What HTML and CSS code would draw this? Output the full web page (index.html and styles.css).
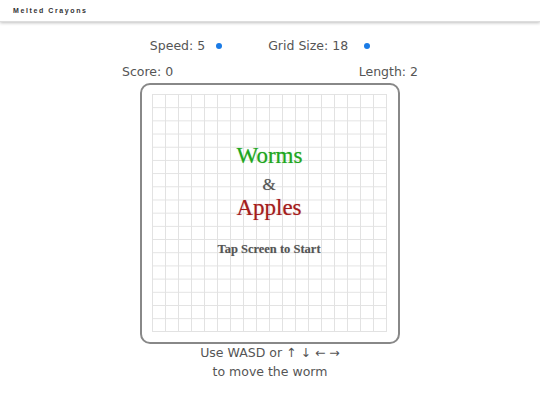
FILE: index.html
```html
<!DOCTYPE html>
<html>
<head>
<meta charset="utf-8">
<link rel="stylesheet" href="styles.css">
</head>
<body>
<header class="topbar"><span class="brand">Melted Crayons</span></header>
<main class="game">
  <div class="settings">
    <div class="setting"><span>Speed: 5</span><span class="dot"></span></div>
    <div class="setting setting-wide"><span>Grid Size: 18</span><span class="dot"></span></div>
  </div>
  <div class="stats"><span>Score: 0</span><span>Length: 2</span></div>
  <div class="board">
    <div class="grid">
      <div class="title">
        <div class="worms">Worms</div>
        <div class="amp">&amp;</div>
        <div class="apples">Apples</div>
        <div class="tap">Tap Screen to Start</div>
      </div>
    </div>
  </div>
  <div class="help">Use WASD or ↑ ↓ ← →<br>to move the worm</div>
</main>
</body>
</html>
```
FILE: styles.css
```css
html, body { margin: 0; padding: 0; background: #fff; }
body { font-family: "DejaVu Sans", Verdana, sans-serif; color: #555; }
.topbar {
  height: 22px;
  display: flex;
  align-items: center;
  padding-left: 13px;
  box-shadow: 0 1px 3px rgba(0,0,0,0.25);
  border-bottom: 1px solid #ddd;
  box-sizing: border-box;
}
.brand {
  font-family: "Liberation Sans", Arial, sans-serif;
  font-size: 7px;
  font-weight: bold;
  letter-spacing: 1.6px;
  color: #333;
}
.game { display: flex; flex-direction: column; align-items: center; }
.settings {
  margin-top: 14px;
  display: flex;
  gap: 46px;
  font-size: 12.5px;
  height: 18px;
  align-items: center;
  margin-right: 20px;
}
.setting { display: flex; align-items: center; gap: 11px; }
.setting-wide { gap: 16px; }
.dot { width: 6px; height: 6px; border-radius: 50%; background: #1a7be6; margin-top: 2px; }
.stats {
  width: 296px;
  display: flex;
  justify-content: space-between;
  font-size: 12.5px;
  margin-top: 10px;
  height: 16px;
  line-height: 16px;
}
.board {
  margin-top: 3px;
  width: 260px;
  height: 261px;
  border: 2px solid #888;
  border-radius: 10px;
  display: flex;
  padding: 9px 11px 10px 10px;
  box-sizing: border-box;
}
.grid {
  flex: 1;
  background-color: #fff;
  background-image:
    linear-gradient(to right, #e2e2e2 1px, transparent 1px),
    linear-gradient(to bottom, #e2e2e2 1px, transparent 1px);
  background-size: 13px 13.2px;
  border-right: 1px solid #e2e2e2;
  border-bottom: 1px solid #e2e2e2;
  display: flex;
  justify-content: center;
}
.title {
  font-family: "Liberation Serif", "Times New Roman", serif;
  text-align: center;
  margin-top: 49px;
}
.worms { color: #1ea61e; font-size: 23px; line-height: 26px; margin-left: 1px; text-shadow: 0 0 1px rgba(30,166,30,0.5); }
.amp { color: #555; font-size: 17px; line-height: 20px; margin-top: 6px; text-shadow: 0 0 1px rgba(0,0,0,0.3); }
.apples { color: #a51c1c; font-size: 23px; line-height: 26px; text-shadow: 0 0 1px rgba(165,28,28,0.5); }
.tap { color: #555; font-size: 12.5px; line-height: 16px; font-weight: bold; margin-top: 20px; text-shadow: 0 0 1px rgba(0,0,0,0.2); }
.help {
  margin-top: -1px;
  font-size: 12.5px;
  line-height: 19px;
  text-align: center;
}
```
